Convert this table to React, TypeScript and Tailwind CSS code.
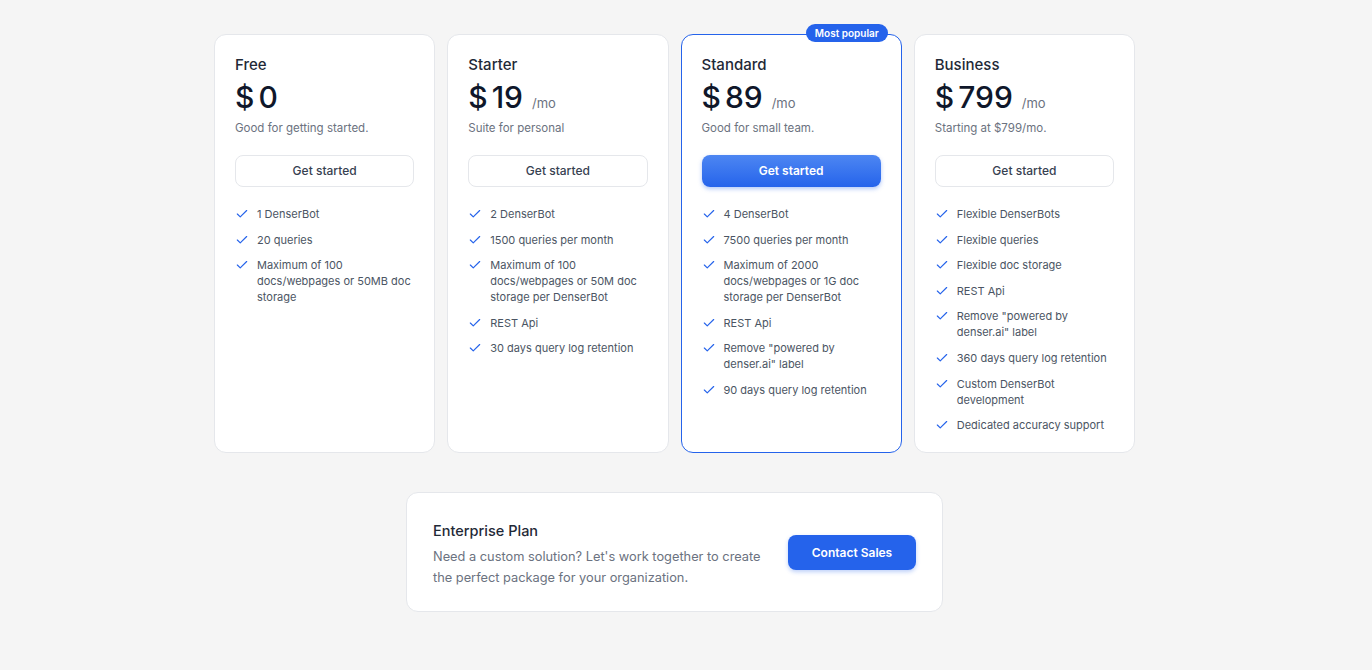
import { Check } from "lucide-react";

type Plan = {
  name: string;
  price: string;
  mo: boolean;
  desc: string;
  popular?: boolean;
  features: string[];
};

const plans: Plan[] = [
  {
    name: "Free",
    price: "0",
    mo: false,
    desc: "Good for getting started.",
    features: ["1 DenserBot", "20 queries", "Maximum of 100 docs/webpages or 50MB doc storage"],
  },
  {
    name: "Starter",
    price: "19",
    mo: true,
    desc: "Suite for personal",
    features: [
      "2 DenserBot",
      "1500 queries per month",
      "Maximum of 100 docs/webpages or 50M doc storage per DenserBot",
      "REST Api",
      "30 days query log retention",
    ],
  },
  {
    name: "Standard",
    price: "89",
    mo: true,
    desc: "Good for small team.",
    popular: true,
    features: [
      "4 DenserBot",
      "7500 queries per month",
      "Maximum of 2000 docs/webpages or 1G doc storage per DenserBot",
      "REST Api",
      'Remove "powered by denser.ai" label',
      "90 days query log retention",
    ],
  },
  {
    name: "Business",
    price: "799",
    mo: true,
    desc: "Starting at $799/mo.",
    features: [
      "Flexible DenserBots",
      "Flexible queries",
      "Flexible doc storage",
      "REST Api",
      'Remove "powered by denser.ai" label',
      "360 days query log retention",
      "Custom DenserBot development",
      "Dedicated accuracy support",
    ],
  },
];

function PlanCard({ p }: { p: Plan }) {
  return (
    <div
      className={`relative w-[221.25px] rounded-xl bg-white px-5 pt-5 pb-[19px] ${
        p.popular ? "border border-[#2563eb]" : "border border-[#e5e7eb]"
      }`}
    >
      {p.popular && (
        <span className="absolute -top-[11px] right-[13px] flex h-[18px] items-center rounded-full bg-[#2563eb] px-[9px] text-[10px] font-semibold text-white">
          Most popular
        </span>
      )}
      <div className="text-[15px] font-medium leading-5 text-[#1f2937]">{p.name}</div>
      <div className="mt-[4px] flex items-baseline">
        <span className="text-[30px] font-medium leading-[36px] text-[#0f172a]">$</span>
        <span className="ml-[4px] text-[30px] font-medium leading-[36px] text-[#0f172a]">{p.price}</span>
        {p.mo && <span className="ml-[9px] text-[13px] text-[#6b7280]">/mo</span>}
      </div>
      <div className="mt-[5px] text-[11.5px] leading-4 text-[#6b7280]">{p.desc}</div>
      {p.popular ? (
        <button className="mt-[19px] h-[32px] w-full rounded-lg bg-gradient-to-b from-[#4d86f2] to-[#2563eb] text-[12px] font-semibold text-white shadow-[0_2px_4px_rgba(37,99,235,0.35)]">
          Get started
        </button>
      ) : (
        <button className="mt-[19px] h-[32px] w-full rounded-lg border border-[#e5e7eb] bg-white text-[12px] font-medium text-[#374151]">
          Get started
        </button>
      )}
      <ul className="mt-[19px] flex flex-col gap-[9.6px]">
        {p.features.map((f) => (
          <li key={f} className="flex items-start">
            <Check className="mt-[1px] h-[14px] w-[14px] shrink-0 text-[#2563eb]" strokeWidth={2} />
            <span className="ml-2 text-[11px] leading-4 text-[#4b5563]">{f}</span>
          </li>
        ))}
      </ul>
    </div>
  );
}

export default function App() {
  return (
    <div
      className="min-h-[670px] bg-[#f5f5f5] pr-[23px] pt-[34px]"
      style={{ fontFamily: "Inter, 'Noto Sans', sans-serif" }}
    >
      <div className="flex items-stretch justify-center gap-3">
        {plans.map((p) => (
          <PlanCard key={p.name} p={p} />
        ))}
      </div>
      <div className="mx-auto mt-[39px] flex h-[120px] w-[537px] items-center justify-between rounded-xl border border-[#e5e7eb] bg-white px-[26px]">
        <div className="pt-[5px]">
          <div className="text-[14.5px] font-medium leading-5 text-[#1f2937]">Enterprise Plan</div>
          <div className="mt-[5px] w-[335px] text-[12.8px] leading-[21px] text-[#6b7280]">
            Need a custom solution? Let's work together to create the perfect package for your organization.
          </div>
        </div>
        <button className="mt-[1px] h-[35px] w-[128px] rounded-lg bg-[#2563eb] text-[12px] font-semibold text-white shadow-[0_2px_4px_rgba(37,99,235,0.3)]">
          Contact Sales
        </button>
      </div>
    </div>
  );
}
